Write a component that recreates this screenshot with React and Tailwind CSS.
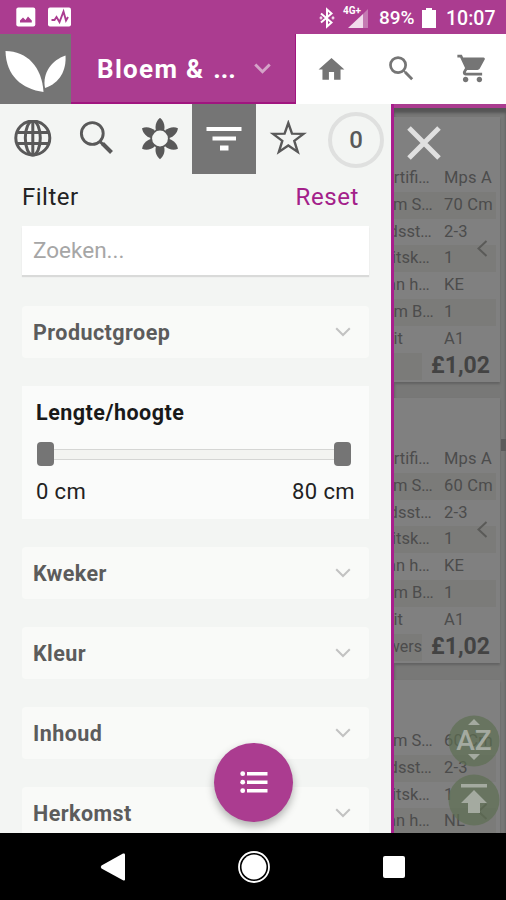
import React from "react";

const font = "font-['Roboto','Liberation_Sans',sans-serif]";

function Chevron({ className }) {
  return (
    <svg className={className} viewBox="0 0 16 10" fill="none" stroke="currentColor">
      <path d="M1.2 1.2 8 8l6.8-6.8" />
    </svg>
  );
}

function StatusBar() {
  return (
    <div className="flex h-[34px] shrink-0 items-center bg-[#ab3c90] text-white">
      <svg className="ml-4 h-5 w-5" viewBox="0 0 20 20">
        <rect x="0.3" y="0.5" width="19" height="19" rx="2" fill="#fff" />
        <path d="M4 15.500v-2l3-3 2.500 2.500 2.500-3.500 3.800 4v2z" fill="#ab3c90" />
      </svg>
      <svg className="ml-3 h-5 w-6" viewBox="0 0 24 20">
        <rect x="0" y="0.5" width="23" height="19" rx="2" fill="#fff" />
        <path d="M3.500 13h3l2-3 3 5 4-10.500 2.500 9 2-3.500" fill="none" stroke="#ab3c90" strokeWidth="1.900" />
      </svg>
      <div className="flex-1" />
      <svg className="mt-[2px] h-[22px] w-4" viewBox="0 0 16 22" fill="none" stroke="#fff" strokeWidth="2">
        <path d="M2 6.500 12.500 15.500 8 19.500V2.500l4.500 4L2 15.500" />
        <circle cx="2" cy="11" r="0.400" />
        <circle cx="14" cy="11" r="0.400" />
      </svg>
      <div className="relative ml-2 mt-[2px] h-6 w-[27px]">
        <span className="absolute left-0 top-0 text-[10px] font-bold leading-[10px]">4G+</span>
        <svg className="h-6 w-[27px]" viewBox="0 0 27 24">
          <path d="M5 22 20 8v14z" fill="#f1dcec" />
          <path d="M20 8l5-5V22H20z" fill="#c47ab2" />
        </svg>
      </div>
      <span className="ml-[9px] mt-[2px] w-[38px] whitespace-nowrap text-[19px] font-medium leading-6 tracking-[-0.1px]">89%</span>
      <svg className="ml-[5px] mt-[2px] h-5 w-[14px]" viewBox="0 0 14 20">
        <path d="M4 0h6v2h4v18H0V2h4z" fill="#fff" />
      </svg>
      <span className="ml-[10px] mr-[10px] mt-[3px] w-[50px] whitespace-nowrap text-[19.5px] font-medium leading-6">10:07</span>
    </div>
  );
}

function Header() {
  return (
    <div className="flex h-[70px] shrink-0">
      <div className="flex w-[71px] items-center justify-center bg-[#757575]">
        <svg className="h-[70px] w-[71px]" viewBox="0 0 71 70" fill="#fff">
          <path d="M5.500 17C27 17 42 33 43.500 58 22 55 6 42 5.500 17z" />
          <path d="M65.500 21.500C66.500 36 60 49 45 54 42 39 52 26 65.500 21.500z" />
        </svg>
      </div>
      <div className="flex w-[225px] items-center border-b-2 border-r border-[#a0157f] bg-[#ab3c90] text-white">
        <span className="ml-[26px] w-[143px] whitespace-nowrap pt-[2px] text-[26px] font-bold tracking-[1.3px]">Bloem &amp; <span className="ml-[1px] tracking-[0px]">...</span></span>
        <Chevron className="ml-[14px] h-[11px] w-[17px] stroke-[2.8] text-[#d5a3c8]" />
      </div>
      <div className="flex flex-1 items-center bg-white text-[#757575]">
        <svg className="ml-[20px] h-[31px] w-[31px]" viewBox="0 0 24 24" fill="currentColor">
          <path d="M10 20v-6h4v6h5v-8h3L12 3 2 12h3v8z" />
        </svg>
        <svg className="-mt-[2px] ml-[38px] h-[33px] w-[33px]" viewBox="0 0 24 24" fill="currentColor">
          <path d="M15.500 14h-.79l-.28-.27A6.471 6.471 0 0 0 16 9.500 6.500 6.500 0 1 0 9.500 16c1.610 0 3.090-.59 4.230-1.570l.27.28v.79l5 4.990L20.490 19l-4.990-5zm-6 0C7.010 14 5 11.990 5 9.500S7.010 5 9.500 5 14 7.010 14 9.500 11.990 14 9.500 14z" />
        </svg>
        <svg className="-mt-[2px] ml-[38px] h-[33px] w-[33px]" viewBox="0 0 24 24" fill="currentColor">
          <path d="M7 18c-1.100 0-1.990.9-1.990 2S5.900 22 7 22s2-.9 2-2-.9-2-2-2zM1 2v2h2l3.600 7.590-1.350 2.450c-.16.28-.25.61-.25.96 0 1.100.9 2 2 2h12v-2H7.420c-.14 0-.25-.11-.25-.25l.03-.12.9-1.630h7.450c.75 0 1.410-.41 1.750-1.030l3.580-6.490A1.003 1.003 0 0 0 20 4H5.210l-.94-2H1zm16 16c-1.100 0-1.990.9-1.990 2s.89 2 1.990 2 2-.9 2-2-.9-2-2-2z" />
        </svg>
      </div>
    </div>
  );
}

function Tools() {
  const petals = [0, 60, 120, 180, 240, 300];
  return (
    <div className="flex h-[70px] shrink-0 text-[#595959]">
      <div className="flex w-16 items-center justify-center pl-[2px]">
        <svg className="h-[38px] w-[38px]" viewBox="0 0 38 38" fill="none" stroke="currentColor" strokeWidth="3">
          <circle cx="18.800" cy="18" r="17" />
          <ellipse cx="18.800" cy="18" rx="7.500" ry="17" />
          <path d="M18.800 1v34M4 12.500h30M4 23.500h30" />
        </svg>
      </div>
      <div className="flex w-16 items-center justify-center">
        <svg className="h-[38px] w-[38px]" viewBox="0 0 38 38" fill="none" stroke="currentColor">
          <circle cx="15.300" cy="13.500" r="10.900" strokeWidth="2.900" />
          <path d="m23 21.500 3 3" strokeWidth="3" />
          <path d="m25.500 23.500 9 9" strokeWidth="4" />
        </svg>
      </div>
      <div className="flex w-16 items-center justify-center">
        <svg className="h-[42px] w-[42px]" viewBox="-21 -20.5 42 42">
          {petals.map((angle) => (
            <path key={angle} transform={`rotate(${angle})`} d="M-4 -8C-5.500 -13 -3.500 -18 0 -20.700 3.500 -18 5.500 -13 4 -8L0 0z" fill="currentColor" />
          ))}
          <circle r="9.700" fill="currentColor" />
          <circle r="7.900" fill="#f3f5f3" />
        </svg>
      </div>
      <div className="flex w-16 items-center justify-center bg-[#757575]">
        <svg className="h-[26px] w-9" viewBox="0 0 36 26" fill="#fff">
          <path d="M.5 1h35v4H.5zM6.500 10.500h23.500v4H6.500zM14 19.500h8.500v5H14z" />
        </svg>
      </div>
      <div className="flex w-16 items-center justify-center">
        <svg className="h-[38px] w-[38px]" viewBox="0 0 38 38" fill="none" stroke="currentColor" strokeWidth="2.400">
          <path d="m19.300 3 3.700 10.600 11.500.3-9.200 7 3.400 11-9.400-6.400-9.400 6.400 3.400-11-9.200-7 11.500-.3z" />
        </svg>
      </div>
      <div className="ml-2 mt-2 flex h-[56px] w-[56px] items-center justify-center rounded-full border-4 border-[#dfe0df] text-[24px] font-medium">0</div>
    </div>
  );
}

function Accordion({ label }) {
  return (
    <div className="mb-[28px] flex h-[52px] shrink-0 items-center justify-between rounded-sm bg-[#f9faf8] pl-[11px] pr-[18px]">
      <span className="pt-[2px] text-[21.5px] font-bold tracking-[0.45px] text-[#5c5c5c]">{label}</span>
      <Chevron className="h-[10px] w-4 stroke-[2] text-[#c2c2c2]" />
    </div>
  );
}

function FilterPanel() {
  return (
    <div className="flex h-full w-[394px] shrink-0 flex-col overflow-hidden border-r-[3px] border-[#a81e8d] bg-[#f3f5f3]">
      <Tools />
      <div className="flex flex-1 flex-col pl-[22px] pr-[22px]">
        <div className="flex h-[52px] shrink-0 items-center justify-between pb-[6px] pr-[10px] text-[24px]">
          <span className="tracking-[0.5px] text-[#222]">Filter</span>
          <span className="tracking-[0.6px] text-[#a3208a]">Reset</span>
        </div>
        <div className="mb-[31px] flex h-[49px] shrink-0 items-center bg-white pl-[11px] pt-[1px] text-[22.5px] text-[#a6a6a6] shadow-[0_2px_1px_#d9dad9]">
          Zoeken...
        </div>
        <Accordion label="Productgroep" />
        <div className="mb-[28px] flex h-[133px] shrink-0 flex-col bg-[#fafbfa] px-[14px] pt-[13px]">
          <span className="text-[21.5px] font-bold leading-7 tracking-[0.5px] text-[#191919]">Lengte/hoogte</span>
          <div className="mt-[15px] flex h-6 items-center pl-[1px] pr-1">
            <span className="h-6 w-[17px] rounded-sm bg-[#757575]" />
            <span className="h-[11px] flex-1 border-y border-[#d5d6d4] bg-[#f3f4f1]" />
            <span className="h-6 w-[17px] rounded-sm bg-[#757575]" />
          </div>
          <div className="mt-3 flex justify-between text-[22px] leading-7 tracking-[0.4px] text-[#222]">
            <span>0 cm</span>
            <span>80 cm</span>
          </div>
        </div>
        <Accordion label="Kweker" />
        <Accordion label="Kleur" />
        <Accordion label="Inhoud" />
        <Accordion label="Herkomst" />
      </div>
    </div>
  );
}

function ProductCard({ rows, seller, className }) {
  return (
    <div className={`relative flex h-[265px] w-[106px] shrink-0 flex-col bg-[#808080] pt-[48px] shadow-[0_2px_2px_#626262] ${className}`}>
      {rows.map(([label, width, value], i) => (
        <div key={i} className={`flex h-[26.8px] w-[102px] shrink-0 items-center text-[16.5px] text-[#4c4c4c] ${i % 2 ? "bg-[#7b7b79]" : ""}`}>
          <span className="flex shrink-0 justify-end whitespace-nowrap" style={{ width }}>
            {label}
            {label !== "it" && <span className="tracking-[-0.8px]">...</span>}
          </span>
          <span className="whitespace-nowrap tracking-[0.2px]" style={{ marginLeft: 50 - width }}>{value}</span>
        </div>
      ))}
      <div className="flex h-[27px] w-[102px] items-center justify-between">
        <span className="flex h-[27px] w-[28px] shrink-0 items-center justify-end bg-[#7b7b79] text-[16px] text-[#4c4c4c]">{seller}</span>
        <span className="mr-[6px] whitespace-nowrap pt-[1px] text-[23px] font-bold text-[#434343]">£1,02</span>
      </div>
      <svg className="absolute left-[82px] top-[123px] h-[17px] w-3" viewBox="0 0 12 17" fill="none" stroke="#5a5a58" strokeWidth="2">
        <path d="m10.500 1-8 7.500 8 7.500" />
      </svg>
    </div>
  );
}

const makeRows = (length) => [
  ["rtifi", 35, "Mps A"],
  ["m S", 38, length],
  ["dsst", 37, "2-3"],
  ["itsk", 35, "1"],
  ["an h", 35, "KE"],
  ["m B", 39, "1"],
  ["it", 9, "A1"],
];

const lastRows = [
  ["m S", 38, "60 Cm"],
  ["dsst", 37, "2-3"],
  ["itsk", 35, "1"],
  ["an h", 35, "NL"],
];

function Products() {
  return (
    <div className="relative flex h-full flex-1 flex-col overflow-hidden border-t-[4px] border-[#ab3c90] bg-[#787877] shadow-[inset_0_5px_3px_#555]">
      <ProductCard className="mt-[9px]" rows={makeRows("70 Cm")} />
      <ProductCard className="mt-[16px]" seller="wers" rows={makeRows("60 Cm")} />
      <ProductCard className="mt-[17px]" rows={lastRows} />
      <svg className="absolute left-[13px] top-[18px] h-[34px] w-[34px]" viewBox="0 0 34 34" stroke="#e0e0e0" strokeWidth="5">
        <path d="m2 2 30 30M32 2 2 32" />
      </svg>
      <div className="absolute right-0 top-[331px] h-[12px] w-[5px] bg-[#5b5b5b]" />
      <svg className="absolute left-[54px] top-[607px] h-[52px] w-[52px]" viewBox="0 0 52 52">
        <circle cx="26" cy="26" r="25.500" fill="#5d6e51" fillOpacity="0.68" />
        <path d="m26 4 6 6H20zm0 41 6-6H20z" fill="#a4aaa0" />
        <text x="26" y="34.500" textAnchor="middle" fontSize="28" fontWeight="500" fill="#a4aaa0">AZ</text>
      </svg>
      <svg className="absolute left-[54px] top-[666px] h-[52px] w-[52px]" viewBox="0 0 52 52">
        <circle cx="26" cy="26" r="25.500" fill="#5d6e51" fillOpacity="0.68" />
        <path d="M13 10h26v3.500H13zM26 16l13 13h-7v10H20V29h-7z" fill="#a4aaa0" />
      </svg>
    </div>
  );
}

function NavBar() {
  return (
    <div className="flex h-[67px] shrink-0 items-center bg-black">
      <svg className="ml-[100px] h-7 w-[26px]" viewBox="0 0 26 28" fill="#fff">
        <path d="M1.500 12.500 23 .5q2-.5 2 1v25q0 1.500-2 .8L1.500 15.500q-1.500-1.500 0-3z" />
      </svg>
      <svg className="ml-[111px] h-[34px] w-[34px]" viewBox="0 0 34 34">
        <circle cx="17" cy="17" r="15" fill="none" stroke="#fff" strokeWidth="1.800" />
        <circle cx="17" cy="17" r="12.500" fill="#fff" />
      </svg>
      <span className="ml-[112px] h-[22px] w-[22px] rounded-[2px] bg-white" />
    </div>
  );
}

export default function App() {
  return (
    <div className={`flex h-[900px] w-[506px] flex-col overflow-hidden ${font}`}>
      <StatusBar />
      <Header />
      <div className="relative flex h-[729px] shrink-0 overflow-hidden">
        <FilterPanel />
        <Products />
        <button className="absolute left-[214px] top-[639px] flex h-[79px] w-[79px] items-center justify-center rounded-full bg-[#ab3c90] shadow-[0_4px_8px_rgba(0,0,0,0.3)]">
          <svg className="h-[23px] w-7" viewBox="0 0 28 23" fill="#fff">
            <circle cx="2.700" cy="2.700" r="2.400" />
            <circle cx="2.700" cy="11.200" r="2.400" />
            <circle cx="2.700" cy="19.700" r="2.400" />
            <path d="M7 1h20.500v3.400H7zM7 9.500h20.500v3.400H7zM7 18h20.500v3.400H7z" />
          </svg>
        </button>
      </div>
      <NavBar />
    </div>
  );
}
